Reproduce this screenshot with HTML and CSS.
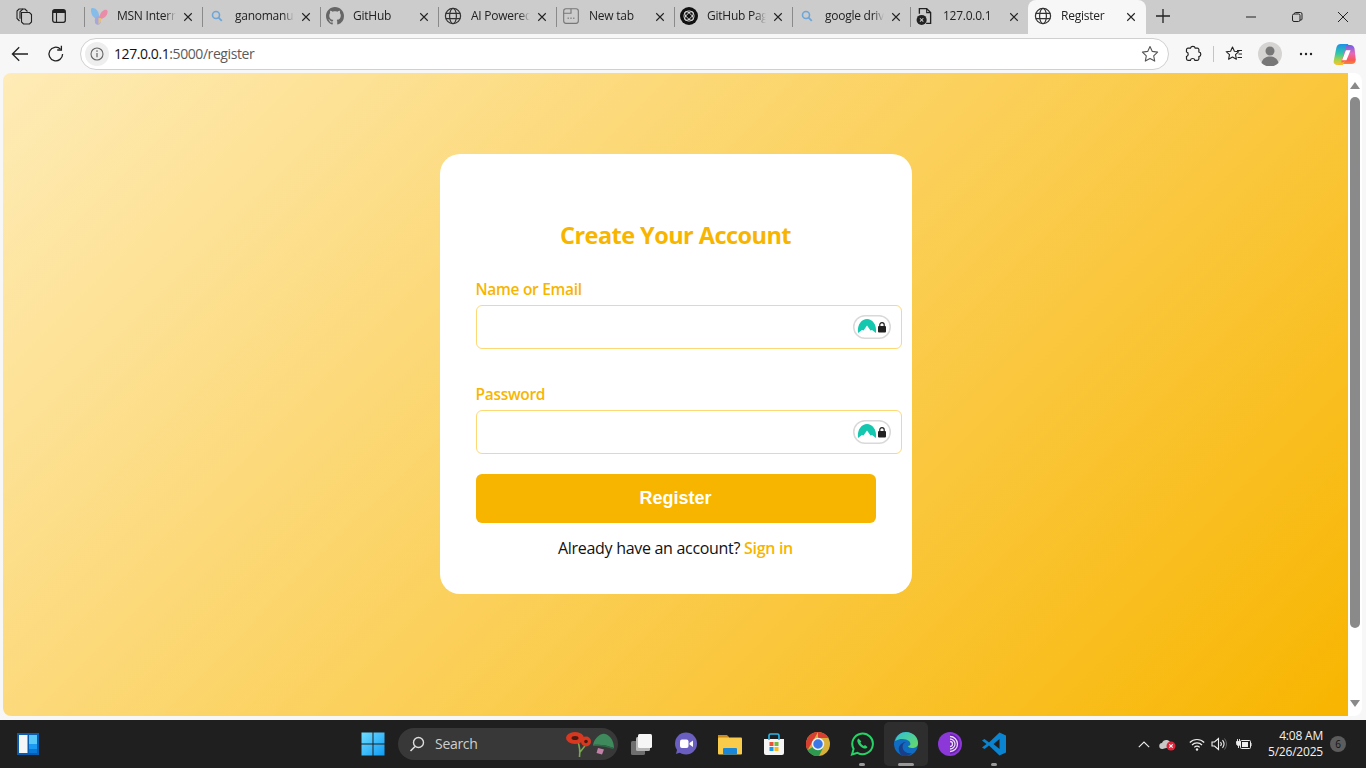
FILE: index.html
```html
<!DOCTYPE html>
<html lang="en">
<head>
<meta charset="utf-8">
<title>Register</title>
<link rel="stylesheet" href="styles.css">
</head>
<body>
<svg class="defs" width="0" height="0" aria-hidden="true">
  <symbol id="x" viewBox="0 0 12 12"><path d="M1.500 1.500l9 9M10.500 1.500l-9 9" fill="none" stroke="#222" stroke-width="1.300"/></symbol>
  <symbol id="globe" viewBox="0 0 18 18"><g fill="none" stroke="#333" stroke-width="1.200"><circle cx="9" cy="9" r="7.600"/><ellipse cx="9" cy="9" rx="3.400" ry="7.600"/><path d="M1.800 6.400h14.400M1.800 11.600h14.400"/></g></symbol>
  <symbol id="search" viewBox="0 0 12 12"><circle cx="5" cy="5" r="3.500" fill="none" stroke="#6ea6d8" stroke-width="1.600"/><path d="M7.600 7.600l3.200 3.200" stroke="#6ea6d8" stroke-width="1.800"/></symbol>
  <symbol id="nord" viewBox="0 0 38 24"><rect x=".75" y=".75" width="36.500" height="22.500" rx="11.250" fill="#fff" stroke="#d9d9d9" stroke-width="1.500"/><path d="M5 18C4 9 9 4 14 4s10 5 9 14l-4-3-1.500.5L14 10.500l-3.500 5L9 15z" fill="#14c8b0"/><rect x="25" y="11" width="8" height="6.500" rx="1" fill="#222"/><path d="M26.800 11.500V9.800a2.200 2.200 0 0 1 4.400 0v1.700" fill="none" stroke="#222" stroke-width="1.200"/></symbol>
</svg>

<header class="tabstrip">
  <div class="strip-tools">
    <svg class="icon18" viewBox="0 0 18 18"><g fill="none" stroke="#222" stroke-width="1.100"><path d="M6.500 5.500h8l2 2v7.500l-2 2h-6l-2-2z"/><path d="M4.500 14 2 11.500V4l2-2h6l2.500 2.500"/><path d="M8 1.800 5 4.800v7"/></g></svg>
    <svg class="icon14" viewBox="0 0 14 14"><rect x=".7" y=".7" width="12.600" height="12.600" rx="2" fill="none" stroke="#222" stroke-width="1.300"/><path d="M1 1h12v3H1z" fill="#222"/><path d="M4.500 4v9" stroke="#222" stroke-width="1.100"/></svg>
  </div>
  <div class="tab sep">
    <svg class="tab-ico" viewBox="0 0 18 18"><path d="M1 1.500C5-.5 9.500 4 9.500 12 4 12.500.5 8 1 1.500z" fill="#86bce8"/><path d="M17.500 4C17 1.500 10 2.500 9 12c5 0 9-3.500 8.500-8z" fill="#e88ca8"/><ellipse cx="7.800" cy="13.500" rx="3" ry="4.300" fill="#a6a8dc"/><path d="M8.500 11h2.500c.5 2.500-.5 5-2.500 6.500z" fill="#e8c078"/></svg>
    <span class="tab-title">MSN Interr</span><svg class="tab-x"><use href="#x"/></svg>
  </div>
  <div class="tab sep">
    <svg class="tab-ico small"><use href="#search"/></svg>
    <span class="tab-title">ganomanu</span><svg class="tab-x"><use href="#x"/></svg>
  </div>
  <div class="tab sep">
    <svg class="tab-ico" viewBox="0 0 16 16"><path fill="#666" d="M8 0C3.580 0 0 3.580 0 8c0 3.540 2.290 6.530 5.470 7.590.4.070.55-.17.55-.38 0-.19-.01-.82-.01-1.490-2.010.37-2.530-.49-2.690-.94-.09-.23-.48-.94-.82-1.130-.28-.15-.68-.52-.01-.53.63-.01 1.080.58 1.230.82.72 1.210 1.870.87 2.330.66.070-.52.28-.87.51-1.070-1.780-.2-3.640-.89-3.640-3.950 0-.87.31-1.590.82-2.150-.08-.2-.36-1.020.08-2.120 0 0 .67-.21 2.200.82.64-.18 1.320-.27 2-.27s1.360.09 2 .27c1.530-1.040 2.200-.82 2.200-.82.44 1.100.16 1.920.08 2.120.51.56.82 1.270.82 2.150 0 3.070-1.870 3.750-3.650 3.950.29.25.54.73.54 1.480 0 1.070-.01 1.930-.01 2.200 0 .21.15.46.55.38A8.013 8.013 0 0 0 16 8c0-4.420-3.580-8-8-8z"/></svg>
    <span class="tab-title">GitHub</span><svg class="tab-x"><use href="#x"/></svg>
  </div>
  <div class="tab sep">
    <svg class="tab-ico"><use href="#globe"/></svg>
    <span class="tab-title">AI Powered</span><svg class="tab-x"><use href="#x"/></svg>
  </div>
  <div class="tab sep">
    <svg class="tab-ico" viewBox="0 0 16 16"><g fill="none" stroke="#777" stroke-width="1"><rect x="1.500" y="1.500" width="13" height="13" rx="2"/><path d="M1.500 5.500h6.500V1.500"/></g><path d="M5 10h1M7.500 10h1M10 10h1" stroke="#777" stroke-width="1.200"/></svg>
    <span class="tab-title">New tab</span><svg class="tab-x"><use href="#x"/></svg>
  </div>
  <div class="tab sep">
    <svg class="tab-ico" viewBox="0 0 16 16"><circle cx="8" cy="8" r="8" fill="#111"/><g fill="none" stroke="#ddd" stroke-width=".8"><circle cx="8" cy="8" r="4.500"/><ellipse cx="8" cy="8" rx="5" ry="2.200" transform="rotate(45 8 8)"/><ellipse cx="8" cy="8" rx="5" ry="2.200" transform="rotate(-45 8 8)"/></g></svg>
    <span class="tab-title">GitHub Pag</span><svg class="tab-x"><use href="#x"/></svg>
  </div>
  <div class="tab sep">
    <svg class="tab-ico small"><use href="#search"/></svg>
    <span class="tab-title">google driv</span><svg class="tab-x"><use href="#x"/></svg>
  </div>
  <div class="tab sep">
    <svg class="tab-ico" viewBox="0 0 16 16"><path d="M3 6V1.500h6.500l3.500 3.500v9.500H9" fill="none" stroke="#222" stroke-width="1.200"/><path d="M9.500 1.500V5H13" fill="none" stroke="#222" stroke-width="1"/><circle cx="5" cy="11.500" r="4.500" fill="#222"/><path d="M3.500 10l3 3M6.500 10l-3 3" stroke="#ccc" stroke-width=".9"/></svg>
    <span class="tab-title">127.0.0.1</span><svg class="tab-x"><use href="#x"/></svg>
  </div>
  <div class="tab active">
    <svg class="tab-ico"><use href="#globe"/></svg>
    <span class="tab-title">Register</span><svg class="tab-x"><use href="#x"/></svg>
  </div>
  <svg class="new-tab" viewBox="0 0 14 14"><path d="M7 0v14M0 7h14" stroke="#222" stroke-width="1.300"/></svg>
  <div class="win-btns">
    <svg class="win" viewBox="0 0 12 12"><path d="M1 6h10" stroke="#222"/></svg>
    <svg class="win" viewBox="0 0 12 12"><g fill="none" stroke="#222"><rect x="1.500" y="3" width="7.500" height="7.500" rx="1.500"/><path d="M3.500 3V2.500a1 1 0 0 1 1-1h5a1.500 1.500 0 0 1 1.500 1.500v5a1 1 0 0 1-1 1H9"/></g></svg>
    <svg class="win" viewBox="0 0 12 12"><path d="M1 1l10 10M11 1L1 11" stroke="#222"/></svg>
  </div>
</header>

<nav class="toolbar">
  <svg class="tb-back" viewBox="0 0 18 16"><path d="M17 8H1.500M8.200 1.200 1.400 8l6.800 6.800" fill="none" stroke="#222" stroke-width="1.300"/></svg>
  <svg class="tb-reload" viewBox="0 0 18 18"><path d="M15.600 9a6.800 6.800 0 1 1-2.200-5" fill="none" stroke="#222" stroke-width="1.300"/><path d="M14.400 0.800v4.200h-4.200" fill="none" stroke="#222" stroke-width="1.300"/></svg>
  <div class="address">
    <span class="info"><svg width="14" height="14" viewBox="0 0 14 14"><circle cx="7" cy="7" r="6" fill="none" stroke="#666" stroke-width="1.100"/><path d="M7 6v4.200" stroke="#666" stroke-width="1.200"/><circle cx="7" cy="4.100" r=".8" fill="#666"/></svg></span>
    <span class="url"><span class="host">127.0.0.1</span>:5000/register</span>
    <svg class="star" viewBox="0 0 18 18"><path d="M9 1.500l2.300 4.900 5.300.7-3.900 3.700 1 5.300L9 13.500l-4.700 2.600 1-5.300L1.400 7.100l5.300-.7z" fill="none" stroke="#555" stroke-width="1.100" stroke-linejoin="round"/></svg>
  </div>
  <svg class="tb-ext" viewBox="0 0 18 18"><path d="M6.500 3.200a2.400 2.400 0 0 1 4.700 0h2.200a1.500 1.500 0 0 1 1.500 1.500v2.200a2.400 2.400 0 0 1 0 4.700v2.200a1.500 1.500 0 0 1-1.500 1.500h-2.500a2.300 2.300 0 0 0-4.500 0H4a1.500 1.500 0 0 1-1.500-1.500v-2.300a2.400 2.400 0 0 0 0-4.600V4.700A1.500 1.500 0 0 1 4 3.200z" fill="none" stroke="#222" stroke-width="1.200"/></svg>
  <span class="tb-div"></span>
  <svg class="tb-fav" viewBox="0 0 18 18"><path d="M7.500 2l1.900 4.200 4.400.5-3.300 3 .9 4.500L7.500 12l-3.900 2.200.9-4.500-3.300-3 4.400-.5z" fill="none" stroke="#222" stroke-width="1.100" stroke-linejoin="round"/><path d="M12 5.500h5M13.500 9h3.500M12.500 12.500h4.500" stroke="#222" stroke-width="1"/></svg>
  <svg class="tb-avatar" viewBox="0 0 24 24"><circle cx="12" cy="12" r="12" fill="#d6d4d2"/><circle cx="12" cy="9" r="4.500" fill="#777"/><path d="M3.500 21c1-5 5-6.500 8.500-6.500s7.500 1.500 8.500 6.500a12 12 0 0 1-17 0z" fill="#777"/></svg>
  <svg class="tb-more" viewBox="0 0 14 4"><circle cx="2" cy="2" r="1.200" fill="#222"/><circle cx="7" cy="2" r="1.200" fill="#222"/><circle cx="12" cy="2" r="1.200" fill="#222"/></svg>
  <svg class="tb-copilot" viewBox="0 0 24 24"><defs><linearGradient id="cl" x1="0" y1="0" x2="0" y2="1"><stop offset="0" stop-color="#1f8fe8"/><stop offset=".45" stop-color="#30c8a8"/><stop offset=".75" stop-color="#a8d048"/><stop offset="1" stop-color="#f8c830"/></linearGradient><linearGradient id="cr" x1="0" y1="0" x2="0" y2="1"><stop offset="0" stop-color="#6a60e8"/><stop offset=".45" stop-color="#e868b8"/><stop offset=".8" stop-color="#f85a50"/><stop offset="1" stop-color="#f88a30"/></linearGradient></defs><path d="M8 1h8L10 23H5C2 23 .2 21 .8 18.500L3.500 5C4 2.500 5.500 1 8 1z" fill="url(#cl)"/><path d="M14 1h4c2.500 0 4 1.500 4.500 4l1.200 11c.3 3-1.500 5-4.200 5H8z" fill="url(#cr)" transform="translate(0 1)"/><path d="M13.500 7.500h4.800L14 18H9.500z" fill="#fff"/><path d="M5 23h5l3-5c-1 2-4 3-6 2z" fill="#f8b830"/></svg>
</nav>

<div class="viewport">
  <main class="page">
    <section class="card">
      <h1 class="card-title">Create Your Account</h1>
      <form class="form">
        <label class="field-label" for="user">Name or Email</label>
        <div class="input-wrap">
          <input class="field" id="user" type="text">
          <svg class="nord"><use href="#nord"/></svg>
        </div>
        <label class="field-label" for="pass">Password</label>
        <div class="input-wrap last">
          <input class="field" id="pass" type="password">
          <svg class="nord"><use href="#nord"/></svg>
        </div>
        <button class="submit" type="button">Register</button>
      </form>
      <p class="signin">Already have an account? <a class="signin-link" href="#">Sign in</a></p>
    </section>
  </main>
  <div class="scrollbar">
    <span class="arrow-up"></span>
    <span class="thumb"></span>
    <span class="arrow-down"></span>
  </div>
</div>

<footer class="taskbar">
  <svg class="widgets" viewBox="0 0 24 24"><rect x="1" y="1" width="22" height="22" fill="#0a5cb0"/><rect x="3" y="3" width="8.500" height="18" fill="#f4f6f8"/><rect x="13" y="3" width="8" height="9" fill="#58c8f8"/><rect x="13" y="12" width="8" height="5" fill="#1a9af0"/><rect x="13" y="17" width="8" height="4" fill="#0a78d8"/></svg>
  <div class="task-center">
    <span class="task-btn"><svg class="i24" viewBox="0 0 24 24"><defs><linearGradient id="w" x1="0" y1="0" x2="1" y2="1"><stop offset="0" stop-color="#6fdcff"/><stop offset="1" stop-color="#0f9cf5"/></linearGradient></defs><path fill="url(#w)" d="M.500.500h11v11H.500zM12.500.500h11v11h-11zM.500 12.500h11v11H.500zM12.500 12.500h11v11h-11z"/></svg></span>
    <div class="searchbox">
      <svg class="search-ico" viewBox="0 0 16 16"><circle cx="9.500" cy="6.500" r="5" fill="none" stroke="#ddd" stroke-width="1.400"/><path d="M6 10.500l-4.500 4.500" stroke="#ddd" stroke-width="1.600"/></svg>
      <span class="search-text">Search</span>
      <svg class="poppy" viewBox="0 0 50 27"><path d="M13 11c2 5 2 10 1.500 15M21 13c-2 4-5 6-6.500 9" stroke="#7aa84f" stroke-width="1.600" fill="none"/><ellipse cx="10" cy="7" rx="9" ry="6" fill="#d8381f"/><ellipse cx="10" cy="7" rx="3.500" ry="2" fill="#4a1a12"/><circle cx="21" cy="10.500" r="5" fill="#d8381f"/><circle cx="21" cy="10.500" r="1.800" fill="#4a1a12"/><path d="M28 14C30 6 36 2 40 3c5 1 9 7 9 14-7-3-15-4-21-3z" fill="#3f8a5c"/><path d="M28 14c6-1 14 0 21 3l-1 1c-7-2.500-14-3.500-20-3z" fill="#2f6a48"/><path d="M33 17l6 1.500-2 5-5.500-1.500z" fill="#c080a8"/></svg>
    </div>
    <span class="task-btn"><svg class="i24" viewBox="0 0 24 24"><rect x="1" y="9" width="14" height="14" rx="1.500" fill="#6e6e6e"/><rect x="6" y="5" width="14" height="14" rx="1.500" fill="#b8b8b8"/><rect x="8" y="2" width="14" height="14" rx="1.500" fill="#f6f6f6"/></svg></span>
    <span class="task-btn"><svg class="i24" viewBox="0 0 24 24"><circle cx="12" cy="11.500" r="11" fill="#6a5fc0"/><path d="M2 22l1.500-6 4 4z" fill="#6a5fc0"/><rect x="6" y="7.500" width="8.500" height="8.500" rx="2" fill="#fff"/><path d="M15.500 11l3.500-2.500v6.500l-3.500-2.500z" fill="#fff"/></svg></span>
    <span class="task-btn"><svg class="i24" viewBox="0 0 24 24"><path d="M0 3h9l2 2v3H0z" fill="#c98a1a"/><rect y="5.500" width="24" height="17" rx="1" fill="#f8cc4a"/><rect x="5" y="16" width="14" height="6.500" rx="1" fill="#1a86d8"/></svg></span>
    <span class="task-btn"><svg class="i24" viewBox="0 0 24 24"><path d="M2 7h20v14a2 2 0 0 1-2 2H4a2 2 0 0 1-2-2z" fill="#f5f5f5"/><path d="M7 8V3.500A1.500 1.500 0 0 1 8.500 2h7A1.500 1.500 0 0 1 17 3.500V8" fill="none" stroke="#2fb8e8" stroke-width="1.600"/><rect x="7.500" y="10" width="4" height="4" fill="#e8543a"/><rect x="12.500" y="10" width="4" height="4" fill="#78b83a"/><rect x="7.500" y="15" width="4" height="4" fill="#1a98e8"/><rect x="12.500" y="15" width="4" height="4" fill="#f8bc1a"/></svg></span>
    <span class="task-btn"><svg class="i24" viewBox="0 0 24 24"><circle cx="12" cy="12" r="12" fill="#d8b03a"/><path d="M12 0a12 12 0 0 1 10.400 6H12z" fill="#d83f33"/><path d="M12 0a12 12 0 0 0-10.400 18L7 9z" fill="#d83f33"/><path d="M1.600 18A12 12 0 0 0 13 24l4-8-10-1z" fill="#2f9a4f"/><circle cx="12" cy="12" r="5.500" fill="#3b78e7" stroke="#eee" stroke-width="1.500"/></svg></span>
    <span class="task-btn dot"><svg class="i24" viewBox="0 0 24 24"><path d="M2 22.500l1.600-5.600A10.300 10.300 0 1 1 7.500 20.800z" fill="none" stroke="#25d366" stroke-width="2"/><path d="M8.500 6.500c-1 .5-1.500 2-1 3.500 1 3 3.500 5.500 6.500 6.500 1.500.4 3-.2 3.500-1.500l-2.500-2-1.200 1c-1.500-.6-2.800-2-3.400-3.400l1-1.200z" fill="#25d366"/></svg></span>
    <span class="task-btn current"><svg class="i24" viewBox="0 0 24 24"><defs><linearGradient id="e" x1="0" y1="0" x2="1" y2="1"><stop offset="0" stop-color="#2fc0d8"/><stop offset="1" stop-color="#6adb60"/></linearGradient></defs><circle cx="12" cy="12" r="12" fill="#0f6cc0"/><path d="M1 9C3 3 7 0 12 0c7 0 12 5 12 11 0 4-3 5-6 5-2 0-4-1-4-2 3 0 3-3 1-5-3-2.500-9-3-14 0z" fill="url(#e)"/><path d="M9 24c-3-1-5-5-4-9 1-3 4-5 7-5-3 1-4 4-3 7 1 3 5 5 9 4-3 3-6 3.500-9 3z" fill="#1a3f8a"/></svg></span>
    <span class="task-btn"><svg class="i24" viewBox="0 0 24 24"><circle cx="12" cy="12" r="12" fill="#8c38d8"/><path d="M12 2a10 10 0 0 1 0 20" fill="#6a1fb0"/><g fill="none" stroke="#eadcf8" stroke-width="1.300"><path d="M12 7a5 5 0 0 1 0 10"/><path d="M12 4.500a7.500 7.500 0 0 1 0 15"/><path d="M12 9.500a2.500 2.500 0 0 1 0 5"/></g></svg></span>
    <span class="task-btn dot"><svg class="i24" viewBox="0 0 24 24"><path d="M17.500.5 24 3.500v17l-6.500 3L7 13.500 2.500 17 0 15.500 4.500 12 0 8.500 2.500 7 7 10.500zM17.500 7l-6 5 6 5z" fill="#0a84d0"/></svg></span>
  </div>
  <div class="tray">
    <svg class="tray-up" viewBox="0 0 12 7"><path d="M.8 6.200 6 1l5.200 5.200" fill="none" stroke="#eee" stroke-width="1.100"/></svg>
    <svg class="tray-cloud" viewBox="0 0 18 14"><path d="M3.500 12a3 3 0 0 1-.5-6c1-3.500 6-4 8-1 3-.5 4 2 3.500 4z" fill="#c8c8c8"/><circle cx="12" cy="9" r="4.500" fill="#e0243a"/><path d="M10.300 7.300l3.400 3.400M13.700 7.300l-3.400 3.400" stroke="#fff" stroke-width="1.100"/></svg>
    <svg class="tray-wifi" viewBox="0 0 16 13"><g fill="none" stroke="#eee" stroke-width="1.200"><path d="M.8 4.500a10.200 10.200 0 0 1 14.400 0"/><path d="M3 7a7 7 0 0 1 10 0"/><path d="M5.300 9.300a3.800 3.800 0 0 1 5.400 0"/></g><circle cx="8" cy="11.500" r="1.200" fill="#eee"/></svg>
    <svg class="tray-vol" viewBox="0 0 16 14"><path d="M1 5h2.500L7.500 1.500v11L3.500 9H1z" fill="none" stroke="#eee" stroke-width="1.100"/><path d="M9.500 5a3 3 0 0 1 0 4M11.500 3.200a6 6 0 0 1 0 7.600" fill="none" stroke="#eee" stroke-width="1.100"/><path d="M13.500 1.500a8.500 8.500 0 0 1 0 11" fill="none" stroke="#666" stroke-width="1"/></svg>
    <svg class="tray-batt" viewBox="0 0 16 12"><rect x="4.500" y="2.500" width="10" height="8" rx="1" fill="none" stroke="#eee" stroke-width="1"/><rect x="6" y="4" width="6" height="5" fill="#eee"/><path d="M15 5v3" stroke="#eee"/><path d="M.5 3.500h4v2a2 2 0 0 1-4 0zM1.500 1v2.500M3.500 1v2.500M2.500 7v3" stroke="#eee" fill="#eee" stroke-width=".9"/></svg>
    <div class="clock"><span>4:08 AM</span><span>5/26/2025</span></div>
    <span class="badge">6</span>
  </div>
</footer>
</body>
</html>
```

FILE: styles.css
```css
* { box-sizing: border-box; }
html, body { margin: 0; height: 100%; }
body {
  width: 1366px;
  height: 768px;
  overflow: hidden;
  display: flex;
  flex-direction: column;
  background: #f7f7f7;
  font-family: "Open Sans", "Noto Sans", "Liberation Sans", sans-serif;
}
.defs { position: absolute; }

/* tab strip */
.tabstrip {
  height: 34px;
  flex: none;
  display: flex;
  align-items: stretch;
  background: #cccccc;
}
.strip-tools {
  width: 84px;
  flex: none;
  display: flex;
  align-items: center;
  gap: 19px;
  padding-left: 15px;
  padding-bottom: 2px;
}
.icon18 { width: 18px; height: 18px; flex: none; }
.icon14 { width: 14px; height: 14px; flex: none; }
.tab {
  width: 118px;
  flex: none;
  display: flex;
  align-items: center;
  position: relative;
  padding-left: 5px;
  font-size: 12px;
  letter-spacing: -.25px;
  color: #222;
}
.tab.sep::before {
  content: "";
  position: absolute;
  left: 0;
  top: 7px;
  width: 1px;
  height: 20px;
  background: #8a8a8a;
}
.tab.active {
  background: #f7f7f7;
  border-radius: 8px 8px 0 0;
}
.tab-ico { width: 18px; height: 18px; flex: none; margin-left: 1px; position: relative; top: -1px; }
.tab-ico.small { width: 12px; height: 12px; margin: 0 3px 0 4px; }
.tab-title {
  width: 59px;
  flex: none;
  margin-left: 9px;
  white-space: nowrap;
  -webkit-mask-image: linear-gradient(to right, #000 82%, transparent);
  mask-image: linear-gradient(to right, #000 82%, transparent);
  position: relative;
  top: -2px;
}
.tab-x { width: 10px; height: 10px; flex: none; margin-left: 7px; }
.tab.active .tab-x { margin-left: 6px; }
.new-tab { width: 14px; height: 14px; flex: none; margin: 9px 0 0 10px; }
.win-btns {
  margin-left: auto;
  display: flex;
  align-items: center;
  gap: 34px;
  padding-right: 17px;
}
.win { width: 12px; height: 12px; }

/* toolbar */
.toolbar {
  height: 39px;
  flex: none;
  display: flex;
  align-items: center;
  background: #f7f7f7;
  padding-left: 11px;
  padding-top: 1px;
}
.tb-back { width: 18px; height: 16px; flex: none; }
.tb-reload { width: 18px; height: 18px; flex: none; margin-left: 18px; }
.address {
  width: 1089px;
  height: 32px;
  flex: none;
  margin-left: 15px;
  display: flex;
  align-items: center;
  background: #fff;
  border: 1px solid #d0d0d0;
  border-radius: 16px;
  padding-left: 4px;
  padding-right: 9px;
}
.info {
  width: 24px;
  height: 24px;
  flex: none;
  display: flex;
  align-items: center;
  justify-content: center;
  background: #eeeeee;
  border-radius: 50%;
}
.url {
  margin-left: 5px;
  font-size: 14px;
  letter-spacing: -.42px;
  color: #5b5b5b;
  position: relative;
  top: -1px;
}
.host { color: #111; }
.star { width: 18px; height: 18px; flex: none; margin-left: auto; }
.tb-ext { width: 18px; height: 18px; flex: none; margin-left: 15px; }
.tb-div { width: 1px; height: 16px; flex: none; background: #c4c4c4; margin-left: 11px; }
.tb-fav { width: 18px; height: 18px; flex: none; margin-left: 11px; }
.tb-avatar { width: 24px; height: 24px; flex: none; margin-left: 15px; }
.tb-more { width: 14px; height: 4px; flex: none; margin-left: 17px; }
.tb-copilot { width: 23px; height: 23px; flex: none; margin-left: 20px; }

/* viewport */
.viewport {
  height: 643px;
  flex: none;
  display: flex;
  padding-left: 3px;
  padding-right: 4px;
  border-radius: 8px;
}
.page {
  width: 1345px;
  flex: none;
  display: flex;
  justify-content: center;
  align-items: flex-start;
  padding-top: 81px;
  background: linear-gradient(135deg, #feebb6 0%, #f8b500 100%);
  border-radius: 8px 0 0 8px;
}
.card {
  width: 472px;
  height: 440px;
  background: #fff;
  border-radius: 20px;
  padding: 61px 36px 0;
}
.card-title {
  margin: 0 0 23px;
  text-align: center;
  font-size: 23.500px;
  line-height: 40px;
  font-weight: 700;
  letter-spacing: -.55px;
  color: #f8b500;
}
.form { width: 400px; }
.field-label {
  display: block;
  font-size: 15.500px;
  line-height: 22px;
  font-weight: 600;
  letter-spacing: -.3px;
  color: #f8b500;
  margin-bottom: 5px;
}
.input-wrap {
  position: relative;
  width: 426px;
  height: 44px;
  margin-bottom: 34px;
}
.input-wrap.last { margin-bottom: 20px; }
.field {
  display: block;
  width: 100%;
  height: 100%;
  border: 1px solid #fdd976;
  border-radius: 6px;
  background: #fff;
  outline: none;
}
.nord {
  position: absolute;
  right: 11px;
  top: 10px;
  width: 38px;
  height: 24px;
}
.submit {
  display: block;
  width: 400px;
  height: 49px;
  border: 0;
  border-radius: 6px;
  background: #f8b500;
  color: #fff;
  font-family: "Liberation Sans", Arial, sans-serif;
  font-size: 18px;
  font-weight: 700;
}
.signin {
  margin: 14px 0 0;
  text-align: center;
  font-size: 16px;
  line-height: 22px;
  letter-spacing: -.3px;
  color: #111;
}
.signin-link {
  color: #f8b500;
  font-weight: 600;
  text-decoration: none;
}

/* scrollbar */
.scrollbar {
  width: 14px;
  flex: none;
  display: flex;
  flex-direction: column;
  align-items: center;
  background: #fff;
  border-radius: 0 8px 8px 0;
  padding-top: 9px;
}
.arrow-up, .arrow-down {
  width: 0;
  height: 0;
  border-left: 5px solid transparent;
  border-right: 5px solid transparent;
}
.arrow-up { border-bottom: 7px solid #8a8a8a; }
.arrow-down { border-top: 7px solid #8a8a8a; margin-top: 72px; }
.thumb {
  width: 10px;
  height: 531px;
  margin-top: 8px;
  border-radius: 5px;
  background: #8a8a8a;
}

/* taskbar */
.taskbar {
  margin-top: 4px;
  height: 48px;
  flex: none;
  position: relative;
  display: flex;
  align-items: center;
  background: #1f1f1f;
  padding-left: 16px;
}
.widgets { width: 24px; height: 24px; flex: none; }
.task-center {
  margin-left: 311px;
  display: flex;
  align-items: center;
}
.task-btn {
  width: 44px;
  height: 44px;
  flex: none;
  display: flex;
  align-items: center;
  justify-content: center;
  position: relative;
  border-radius: 5px;
}
.task-btn.current { background: #2e2e2e; }
.task-btn.dot::after, .task-btn.current::after {
  content: "";
  position: absolute;
  left: 50%;
  bottom: 0;
  width: 6px;
  height: 3px;
  margin-left: -3px;
  border-radius: 2px;
  background: #9a9a9a;
}
.task-btn.current::after { width: 16px; margin-left: -8px; }
.i24 { width: 24px; height: 24px; }
.searchbox {
  width: 220px;
  height: 32px;
  flex: none;
  margin: 0 2px 0 3px;
  padding-left: 11px;
  display: flex;
  align-items: center;
  background: #383838;
  border-radius: 16px;
}
.search-ico { width: 16px; height: 16px; flex: none; }
.search-text {
  margin-left: 10px;
  font-size: 14px;
  letter-spacing: -.3px;
  color: #cfcfcf;
  position: relative;
  top: -1px;
}
.poppy { width: 50px; height: 27px; flex: none; margin-left: auto; margin-right: 3px; }
.tray {
  position: absolute;
  top: 0;
  bottom: 0;
  right: 0;
  display: flex;
  align-items: center;
}
.tray-up { width: 12px; height: 7px; margin-right: 9px; }
.tray-cloud { width: 18px; height: 14px; margin-right: 12px; }
.tray-wifi { width: 16px; height: 13px; margin-right: 6px; }
.tray-vol { width: 16px; height: 14px; margin-right: 9px; }
.tray-batt { width: 16px; height: 12px; margin-right: 16px; }
.clock {
  display: flex;
  flex-direction: column;
  align-items: flex-end;
  font-size: 12px;
  line-height: 16px;
  letter-spacing: -.2px;
  color: #f2f2f2;
}
.badge {
  width: 16px;
  height: 16px;
  margin: 0 20px 0 7px;
  display: flex;
  align-items: center;
  justify-content: center;
  border-radius: 50%;
  background: #5c5c5c;
  font-size: 10px;
  color: #111;
}
```
